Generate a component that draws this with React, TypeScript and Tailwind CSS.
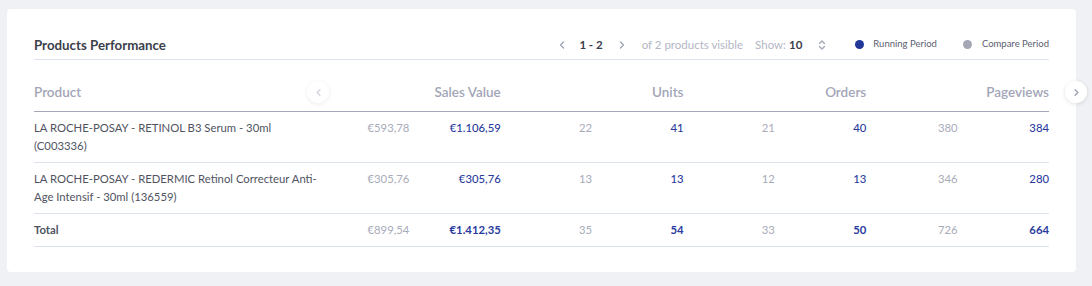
import { ChevronLeft, ChevronRight } from "lucide-react";

type Row = {
    name: string;
    sales: [string, string];
    units: [string, string];
    orders: [string, string];
    views: [string, string];
};

const rows: Row[] = [
    {
        name: "LA ROCHE-POSAY - RETINOL B3 Serum - 30ml (C003336)",
        sales: ["€593,78", "€1.106,59"],
        units: ["22", "41"],
        orders: ["21", "40"],
        views: ["380", "384"],
    },
    {
        name: "LA ROCHE-POSAY - REDERMIC Retinol Correcteur Anti-Age Intensif - 30ml (136559)",
        sales: ["€305,76", "€305,76"],
        units: ["13", "13"],
        orders: ["12", "13"],
        views: ["346", "280"],
    },
];

const total: Row = {
    name: "Total",
    sales: ["€899,54", "€1.412,35"],
    units: ["35", "54"],
    orders: ["33", "50"],
    views: ["726", "664"],
};

function SortIcon() {
    return (
        <svg width="8" height="12" viewBox="0 0 8 12" fill="none">
            <path d="M1.5 4.5L4 2L6.5 4.5" stroke="#a3a6b6" strokeWidth="1.3" strokeLinecap="round" strokeLinejoin="round" />
            <path d="M1.5 7.5L4 10L6.5 7.5" stroke="#a3a6b6" strokeWidth="1.3" strokeLinecap="round" strokeLinejoin="round" />
        </svg>
    );
}

function ValueCells({ row, bold }: { row: Row; bold?: boolean }) {
    const pairs = [row.sales, row.units, row.orders, row.views];
    return (
        <>
            {pairs.map((p, i) => (
                <div key={i} className="contents">
                    <div className="text-right text-[#a8abb9]">{p[0]}</div>
                    <div className={`text-right text-[#2a3b9e] ${bold ? "font-bold" : "font-medium"}`}>{p[1]}</div>
                </div>
            ))}
        </>
    );
}

export default function App() {
    const cols = "grid grid-cols-[284px_repeat(8,minmax(0,1fr))]";

    return (
        <div className="min-h-[286px] w-[1092px] bg-[#f0f1f5] pt-[9px] pl-[7px] font-['Lato',sans-serif]">
            <div className="relative w-[1069px] h-[263px] rounded bg-white px-[27px] pt-[27px]">

                {/* Header */}
                <div className="flex items-center h-[24px] pb-[1px] border-b border-[#dde3ef]">
                    <h2 className="text-[13.3px] font-bold text-[#3b3e4b] leading-[18px] -mt-[5px]">Products Performance</h2>
                    <div className="ml-auto flex items-center text-[11.5px] -mt-[5px]">
                        <ChevronLeft size={12} strokeWidth={2.5} className="text-[#9ea1b2]" />
                        <span className="ml-[11px] font-bold text-[#3b3e4b]">1 - 2</span>
                        <ChevronRight size={12} strokeWidth={2.5} className="ml-[13px] text-[#9ea1b2]" />
                        <span className="ml-[14px] text-[#b3b6c4]">of 2 products visible</span>
                        <span className="ml-[12px] text-[#b3b6c4]">Show:</span>
                        <span className="ml-[3px] font-bold text-[#3b3e4b]">10</span>
                        <span className="ml-[16px] flex"><SortIcon /></span>
                        <span className="ml-[29px] w-[9px] h-[9px] rounded-full bg-[#23369a]" />
                        <span className="ml-[9px] text-[9.5px] text-[#5d6070]">Running Period</span>
                        <span className="ml-[26px] w-[9px] h-[9px] rounded-full bg-[#a4a6b5]" />
                        <span className="ml-[10px] text-[9.5px] text-[#5d6070]">Compare Period</span>
                    </div>
                </div>

                {/* Table */}
                <div className="relative">
                    <div className={`${cols} items-end h-[52px] pb-[10px] border-b border-[#a2a6b8] text-[13.5px] font-semibold text-[#a2a5b7] leading-[18px]`}>
                        <div>Product</div>
                        <div className="col-span-2 text-right">Sales Value</div>
                        <div className="col-span-2 text-right">Units</div>
                        <div className="col-span-2 text-right">Orders</div>
                        <div className="col-span-2 text-right">Pageviews</div>
                    </div>
                    <button className="absolute left-[273px] top-[21px] w-[22px] h-[22px] rounded-full bg-white shadow-[0_1px_4px_rgba(0,0,0,0.08)] flex items-center justify-center">
                        <ChevronLeft size={11} strokeWidth={3} className="text-[#d4d5dc]" />
                    </button>

                    {rows.map((r) => (
                        <div key={r.name} className={`${cols} items-start py-[7px] border-b border-[#dde3ef] text-[11.3px] leading-[18px] text-[#50535f]`}>
                            <div className="-mr-[8px]">{r.name}</div>
                            <ValueCells row={r} />
                        </div>
                    ))}
                    <div className={`${cols} items-center py-[7px] border-b border-[#dde3ef] text-[11.3px] leading-[18px]`}>
                        <div className="font-bold text-[#50535f]">Total</div>
                        <ValueCells row={total} bold />
                    </div>
                </div>

                <button className="absolute right-[-11px] top-[72px] w-[22px] h-[22px] rounded-full bg-white shadow-[0_1px_4px_rgba(0,0,0,0.12)] flex items-center justify-center">
                    <ChevronRight size={11} strokeWidth={3} className="text-[#9ea1b2]" />
                </button>
            </div>
        </div>
    );
}
